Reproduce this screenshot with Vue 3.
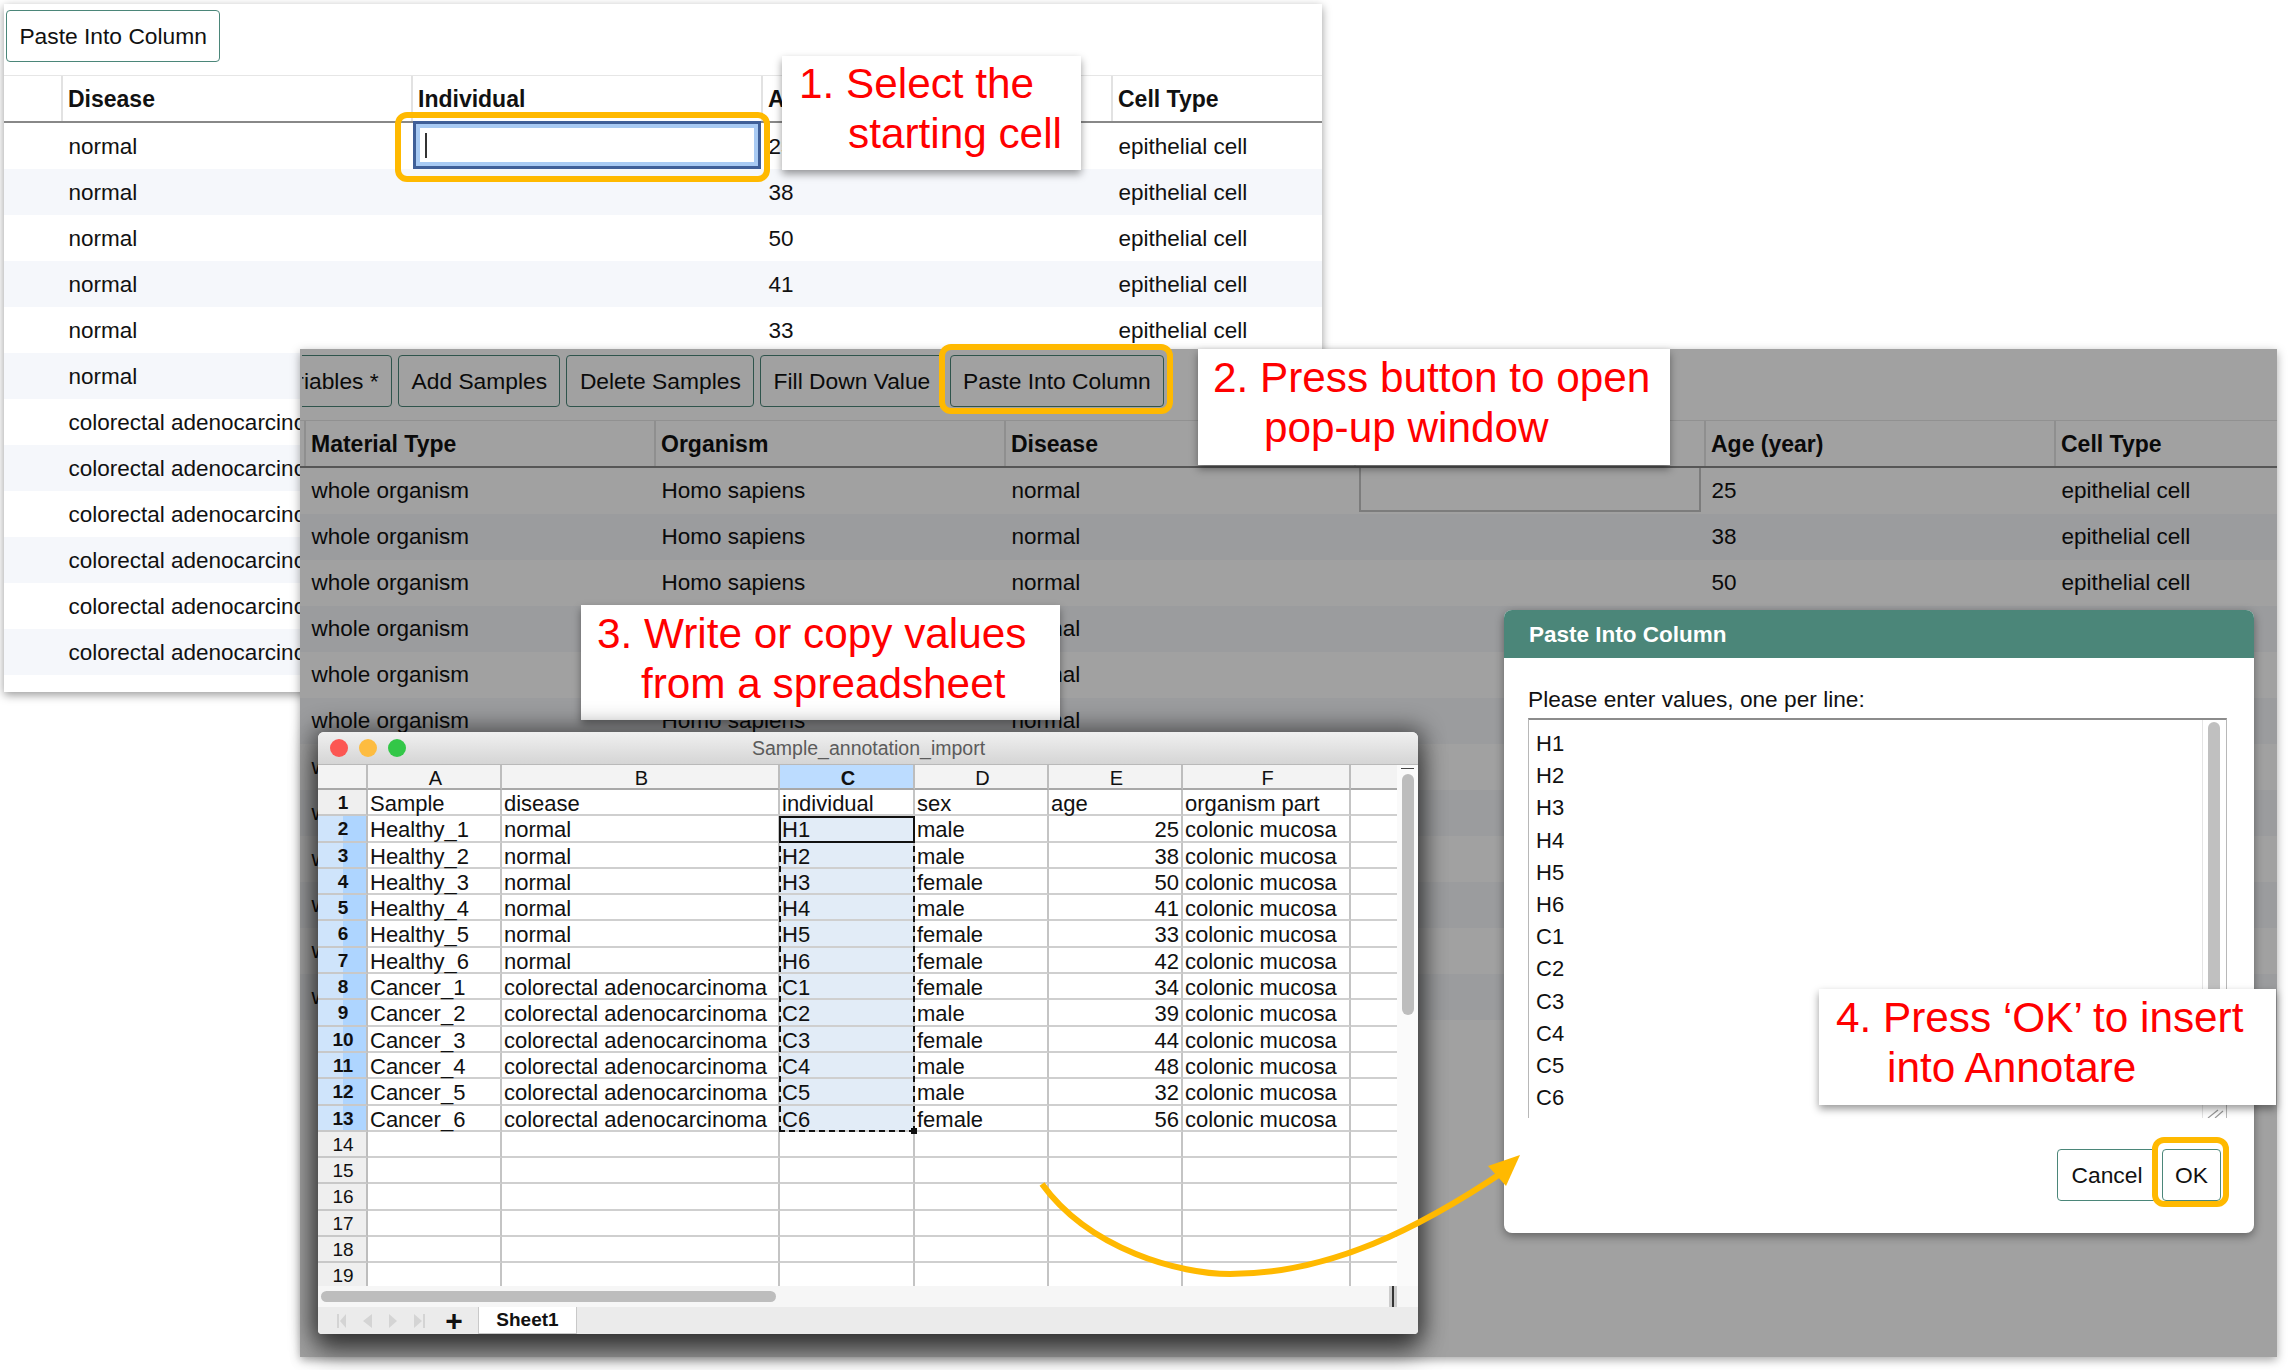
<template>
  <div class="canvas">
    <!-- pantalla de fons: taula d'Annotare -->
    <section class="page page-back">
      <div class="toolbar">
        <button class="btn">Paste Into Column</button>
      </div>
      <div class="table-row head">
        <div></div>
        <div class="cell">Disease</div>
        <div class="cell">Individual</div>
        <div class="cell">Age (year)</div>
        <div class="cell">Cell Type</div>
      </div>
      <div v-for="(row, i) in samples" :key="i" class="table-row" :class="{ odd: i % 2 === 1 }">
        <div></div>
        <div class="cell">{{ row.disease }}</div>
        <div class="cell open">
          <div v-if="i === 0" class="cell-input"><span class="caret"></span></div>
        </div>
        <div class="cell">{{ row.age }}</div>
        <div class="cell">epithelial cell</div>
      </div>
    </section>
    <div class="mark mark-cell"></div>
    <div class="note note-1">
      <div>1. Select the</div>
      <div class="indent-1">starting cell</div>
    </div>

    <!-- pantalla enfosquida amb el diàleg obert -->
    <section class="page page-front">
      <div class="toolbar toolbar-right">
        <button class="btn">Edit Variables *</button>
        <button class="btn">Add Samples</button>
        <button class="btn">Delete Samples</button>
        <button class="btn">Fill Down Value</button>
        <button class="btn">Paste Into Column</button>
      </div>
      <div class="table-row wide head">
        <div></div>
        <div class="cell">Material Type</div>
        <div class="cell">Organism</div>
        <div class="cell">Disease</div>
        <div class="cell">Individual</div>
        <div class="cell">Age (year)</div>
        <div class="cell">Cell Type</div>
      </div>
      <div v-for="(row, i) in samples" :key="i" class="table-row wide" :class="{ odd: i % 2 === 1 }">
        <div></div>
        <div class="cell">whole organism</div>
        <div class="cell">Homo sapiens</div>
        <div class="cell">{{ row.disease }}</div>
        <div class="cell open"><div v-if="i === 0" class="cell-box"></div></div>
        <div class="cell">{{ row.age }}</div>
        <div class="cell">epithelial cell</div>
      </div>
      <div class="dim"></div>
    </section>
    <div class="mark mark-button"></div>
    <div class="note note-2">
      <div>2. Press button to open</div>
      <div class="indent-2">pop-up window</div>
    </div>
    <div class="note note-3">
      <div>3. Write or copy values</div>
      <div class="indent-3">from a spreadsheet</div>
    </div>

    <!-- full de càlcul -->
    <section class="sheet">
      <div class="titlebar">
        <span class="light red"></span>
        <span class="light amber"></span>
        <span class="light green"></span>
        <span class="title-text">Sample_annotation_import</span>
      </div>
      <div class="sheet-main">
        <div class="grid">
          <div class="col-head"></div>
          <div v-for="c in columns" :key="c" class="col-head" :class="{ selected: c === 'C' }">{{ c }}</div>
          <template v-for="(r, i) in sheetRows" :key="i">
            <div class="row-head" :class="{ picked: i > 0 && i < 13, strong: i < 13 }">{{ i + 1 }}</div>
            <div v-for="(v, j) in r" :key="j" class="sc" :class="{ num: j === 4 && i > 0, tint: j === 2 && i > 0 && i < 13 }">{{ v }}</div>
          </template>
          <div class="marquee"><span class="handle"></span></div>
          <div class="active"></div>
        </div>
        <div class="v-scroll">
          <span class="v-cap"></span>
          <span class="v-thumb"></span>
        </div>
      </div>
      <div class="h-scroll">
        <span class="h-thumb"></span>
        <span class="h-end"></span>
      </div>
      <div class="tabs">
        <svg class="tab-nav" width="100" height="14" viewBox="0 0 100 14" fill="#d4d4d4">
          <path d="M0 0h2v14H0zM9 0v14L3 7zM35 0v14l-9-7zM52 0v14l8-7zM77 0v14l8-7zM86 0h2v14h-2z" />
        </svg>
        <span class="plus">+</span>
        <span class="tab">Sheet1</span>
      </div>
    </section>

    <!-- diàleg -->
    <section class="dialog">
      <div class="dialog-title">Paste Into Column</div>
      <div class="dialog-body">
        <div class="dialog-label">Please enter values, one per line:</div>
        <div class="values">
          <div class="values-text">
            <div v-for="v in pasted" :key="v">{{ v }}</div>
          </div>
          <div class="values-scroll">
            <span class="values-thumb"></span>
            <svg class="grip" width="18" height="10" viewBox="0 0 18 10" stroke="#9a9a9a" stroke-width="1.2">
              <path d="M2 10 12 2M9 10 17 3" />
            </svg>
          </div>
        </div>
        <div class="dialog-actions">
          <button class="btn cancel">Cancel</button>
          <button class="btn ok">OK</button>
        </div>
      </div>
    </section>
    <div class="mark mark-ok"></div>
    <div class="note note-4">
      <div>4. Press ‘OK’ to insert</div>
      <div class="indent-4">into Annotare</div>
    </div>

    <svg class="arrow" width="2293" height="1370" viewBox="0 0 2293 1370">
      <path d="M1042 1184C1090 1250 1180 1274 1230 1274C1330 1274 1420 1228 1506 1170" fill="none" stroke="#ffb900" stroke-width="6" />
      <path d="M1520 1155 1488 1166 1506 1186Z" fill="#ffb900" />
    </svg>
  </div>
</template>

<script setup>
const ages = [25, 38, 50, 41, 33, 42, 34, 39, 44, 48, 32, 56]
const sexes = ['male', 'male', 'female', 'male', 'female', 'female', 'female', 'male', 'female', 'male', 'male', 'female']
const pasted = ['H1', 'H2', 'H3', 'H4', 'H5', 'H6', 'C1', 'C2', 'C3', 'C4', 'C5', 'C6']

const samples = ages.map((age, i) => ({
  age,
  disease: i < 6 ? 'normal' : 'colorectal adenocarcinoma',
}))

const columns = ['A', 'B', 'C', 'D', 'E', 'F', '']

const sheetRows = [
  ['Sample', 'disease', 'individual', 'sex', 'age', 'organism part', ''],
  ...ages.map((age, i) => [
    i < 6 ? `Healthy_${i + 1}` : `Cancer_${i - 5}`,
    samples[i].disease,
    pasted[i],
    sexes[i],
    age,
    'colonic mucosa',
    '',
  ]),
  ...Array.from({ length: 6 }, () => ['', '', '', '', '', '', '']),
]
</script>

<style>
html,
body {
  margin: 0;
  background: #fff;
}
</style>

<style scoped>
.canvas {
  position: relative;
  width: 2293px;
  height: 1370px;
  overflow: hidden;
  background: #fff;
  font-family: "Liberation Sans", Arial, sans-serif;
  color: #111;
}

/* pantalles */
.page {
  position: absolute;
  background: #fff;
  overflow: hidden;
  box-sizing: border-box;
}
.page-back {
  left: 4px;
  top: 4px;
  width: 1318px;
  height: 688px;
  box-shadow: 0 3px 9px rgba(0, 0, 0, 0.4);
}
.page-front {
  left: 300px;
  top: 349px;
  width: 1977px;
  height: 1008px;
  box-shadow: 0 3px 9px rgba(0, 0, 0, 0.35);
}
.dim {
  position: absolute;
  inset: 0;
  background: rgba(0, 0, 0, 0.37);
}

.toolbar {
  display: flex;
  gap: 6px;
  height: 52px;
  margin: 6px 0 13px 2px;
}
.toolbar-right {
  width: 862px;
  justify-content: flex-end;
  overflow: hidden;
}
.btn {
  flex: none;
  height: 52px;
  padding: 0 12.4px;
  box-sizing: border-box;
  background: #fff;
  border: 1.5px solid #4b8679;
  border-radius: 4px;
  font-family: inherit;
  font-size: 22.8px;
  color: #111;
}

.table-row {
  display: grid;
  grid-template-columns: 57px 350px 350px 350px 211px;
  height: 46px;
  align-items: center;
  font-size: 22.5px;
}
.table-row.wide {
  grid-template-columns: 4px 350px 350px 350px 350px 350px 223px;
}
.table-row.odd {
  background: #f5f7fb;
}
.table-row.head {
  height: 48px;
  box-sizing: border-box;
  border-top: 1px solid #e6e6e6;
  border-bottom: 2px solid #888;
  font-size: 23px;
  font-weight: bold;
  align-items: stretch;
}
.head > div {
  border-left: 2px solid #e2e2e2;
  display: flex;
  align-items: center;
  padding-left: 5px;
  padding-top: 1px;
}
.head > div:first-child {
  border-left: 0;
  padding-left: 0;
}
.cell {
  padding-left: 7.5px;
  white-space: nowrap;
  overflow: hidden;
  min-width: 0;
}
.page-back .table-row:not(.head) .cell {
  padding-top: 2px;
}
.cell.open {
  overflow: visible;
  height: 46px;
  padding-top: 0 !important;
}
.cell-input {
  height: 48px;
  margin: -2px 0 0 -6px;
  box-sizing: border-box;
  background: #fff;
  border: 3px solid #3f5f98;
  box-shadow: inset 0 0 0 4px #a8caf3;
  display: flex;
  align-items: center;
  padding-left: 9px;
}
.caret {
  width: 2px;
  height: 25px;
  background: #333;
}
.cell-box {
  height: 44px;
  margin: 0 3px 0 -3px;
  box-sizing: border-box;
  border: 2px solid #c4c4c4;
  border-top: 0;
}

/* marques grogues i notes */
.mark {
  position: absolute;
  box-sizing: border-box;
  border: 6px solid #ffb900;
  border-radius: 12px;
}
.mark-cell {
  left: 395px;
  top: 112px;
  width: 375px;
  height: 70px;
}
.mark-button {
  left: 939px;
  top: 344px;
  width: 234px;
  height: 70px;
}
.mark-ok {
  left: 2152px;
  top: 1137px;
  width: 77px;
  height: 70px;
}
.note {
  position: absolute;
  background: #fff;
  color: #f00;
  font-size: 42.3px;
  line-height: 50px;
  white-space: nowrap;
  box-sizing: border-box;
  padding-bottom: 8px;
  display: flex;
  flex-direction: column;
  justify-content: center;
  box-shadow: 0 4px 8px rgba(0, 0, 0, 0.4);
}
.note-1 {
  left: 782px;
  top: 56px;
  width: 299px;
  height: 114px;
  padding-left: 17px;
}
.indent-1 {
  padding-left: 49px;
}
.note-2 {
  left: 1198px;
  top: 349px;
  width: 472px;
  height: 116px;
  padding-left: 15px;
}
.indent-2 {
  padding-left: 51px;
}
.note-3 {
  left: 581px;
  top: 605px;
  width: 479px;
  height: 115px;
  padding-left: 16px;
}
.indent-3 {
  padding-left: 44px;
}
.note-4 {
  left: 1819px;
  top: 989px;
  width: 457px;
  height: 116px;
  padding-left: 17px;
}
.indent-4 {
  padding-left: 51px;
}

/* full de càlcul */
.sheet {
  position: absolute;
  left: 318px;
  top: 732px;
  width: 1100px;
  height: 602px;
  background: #fff;
  border-radius: 6px 6px 4px 4px;
  overflow: hidden;
  box-shadow: 0 0 22px 6px rgba(0, 0, 0, 0.45), 0 18px 26px rgba(0, 0, 0, 0.5);
  display: flex;
  flex-direction: column;
}
.titlebar {
  flex: none;
  height: 33px;
  display: flex;
  align-items: center;
  gap: 11px;
  padding-left: 12px;
  position: relative;
  background: linear-gradient(#f0f0f0, #d5d5d5);
  border-bottom: 1px solid #b9b9b9;
  box-sizing: border-box;
}
.light {
  width: 18px;
  height: 18px;
  border-radius: 50%;
}
.red {
  background: #fc5753;
}
.amber {
  background: #fdbc40;
}
.green {
  background: #33c748;
}
.title-text {
  position: absolute;
  left: 434px;
  top: 5px;
  font-size: 19.5px;
  color: #5b5b5b;
}
.sheet-main {
  flex: none;
  height: 521px;
  display: flex;
  overflow: hidden;
}
.grid {
  flex: none;
  width: 1079px;
  position: relative;
  display: grid;
  grid-template-columns: 50px 134px 278px 135px 134px 134px 168px 46px;
  grid-template-rows: 25px repeat(19, 26.3px);
  font-size: 22px;
}
.col-head {
  background: #f3f3f3;
  border-right: 2px solid #bdbdbd;
  border-bottom: 2px solid #a8a8a8;
  box-sizing: border-box;
  padding-left: 3px;
  text-align: center;
  font-size: 20px;
  line-height: 26px;
}
.col-head:nth-child(8) {
  border-right: 0;
}
.col-head.selected {
  background: #bcdcff;
  font-weight: bold;
}
.row-head {
  background: #efefef;
  border-right: 2px solid #bdbdbd;
  border-bottom: 2px solid #c8c8c8;
  box-sizing: border-box;
  padding-left: 2px;
  text-align: center;
  font-size: 19px;
  line-height: 26px;
}
.row-head.strong {
  font-weight: bold;
}
.row-head.picked {
  background: linear-gradient(90deg, #cfe4fb 25px, #aed5ff 25px);
}
.sc {
  border-right: 2px solid #c4c4c4;
  border-bottom: 2px solid #cfcfcf;
  box-sizing: border-box;
  padding: 1px 2px 0;
  line-height: 25px;
  white-space: nowrap;
  min-width: 0;
}
.sc.num {
  text-align: right;
}
.sc.tint {
  background: #e2ecf7;
}
.sc:nth-child(8n) {
  border-right: 0;
}
.marquee {
  position: absolute;
  left: 461px;
  top: 51px;
  width: 136px;
  height: 316px;
  box-sizing: border-box;
  border: 2px dashed #111;
  pointer-events: none;
}
.handle {
  position: absolute;
  right: -4px;
  bottom: -4px;
  width: 6px;
  height: 6px;
  background: #111;
}
.active {
  position: absolute;
  left: 461px;
  top: 51px;
  width: 136px;
  height: 27px;
  box-sizing: border-box;
  border: 2.5px solid #111;
  pointer-events: none;
}
.v-scroll {
  flex: none;
  width: 21px;
  background: #fafafa;
  position: relative;
}
.v-cap {
  position: absolute;
  left: 4px;
  top: 3px;
  width: 13px;
  height: 1px;
  background: #444;
}
.v-thumb {
  position: absolute;
  left: 5px;
  top: 9px;
  width: 12px;
  height: 241px;
  border-radius: 6px;
  background: #bdbdbd;
}
.h-scroll {
  flex: none;
  height: 21px;
  background: #f6f6f6;
  display: flex;
  align-items: center;
  justify-content: space-between;
  padding-left: 3px;
}
.h-thumb {
  width: 455px;
  height: 11px;
  border-radius: 6px;
  background: #bdbdbd;
}
.h-end {
  width: 8px;
  height: 21px;
  margin-right: 21px;
  background: linear-gradient(90deg, #ccc 3px, #333 3px, #333 5px, #ccc 5px);
}
.tabs {
  flex: 1;
  display: flex;
  align-items: stretch;
  background: #ebebeb;
}
.tab-nav {
  align-self: center;
  margin-left: 19px;
  flex: none;
}
.plus {
  width: 22px;
  margin-left: 6px;
  align-self: center;
  font-size: 30px;
  font-weight: bold;
  line-height: 27px;
  text-align: center;
}
.tab {
  width: 99px;
  margin-left: 13px;
  background: #fff;
  box-sizing: border-box;
  border: 1px solid #c9c9c9;
  border-top: 0;
  text-align: center;
  font-size: 19px;
  font-weight: bold;
  line-height: 26px;
}

/* diàleg */
.dialog {
  position: absolute;
  left: 1504px;
  top: 610px;
  width: 750px;
  height: 623px;
  background: #fff;
  border-radius: 8px;
  overflow: hidden;
  box-shadow: 0 3px 10px rgba(0, 0, 0, 0.4);
  display: flex;
  flex-direction: column;
}
.dialog-title {
  flex: none;
  height: 48px;
  padding-left: 25px;
  background: #4b8679;
  color: #fff;
  font-size: 22.5px;
  font-weight: bold;
  line-height: 49px;
}
.dialog-body {
  flex: 1;
  padding: 0 27px 0 24px;
  display: flex;
  flex-direction: column;
}
.dialog-label {
  height: 60px;
  line-height: 83px;
  font-size: 22.7px;
  white-space: nowrap;
}
.values {
  flex: none;
  height: 400px;
  box-sizing: border-box;
  border-top: 2px solid #8c8c8c;
  border-left: 1px solid #b8b8b8;
  border-right: 1px solid #b8b8b8;
  display: flex;
  justify-content: space-between;
  overflow: hidden;
}
.values-text {
  padding: 8px 0 0 7px;
  font-size: 22px;
  line-height: 32.2px;
}
.values-scroll {
  width: 23px;
  position: relative;
  border-left: 1px solid #e4e4e4;
}
.values-thumb {
  position: absolute;
  left: 5px;
  top: 2px;
  width: 12px;
  height: 380px;
  border-radius: 6px;
  background: #c0c0c0;
}
.grip {
  position: absolute;
  right: 2px;
  bottom: 0;
}
.dialog-actions {
  display: flex;
  justify-content: flex-end;
  gap: 5px;
  margin-top: 31px;
  padding-right: 6px;
}
.cancel {
  width: 100px;
  padding: 0;
}
.ok {
  width: 59px;
  padding: 0;
}

.arrow {
  position: absolute;
  left: 0;
  top: 0;
  pointer-events: none;
}
</style>
